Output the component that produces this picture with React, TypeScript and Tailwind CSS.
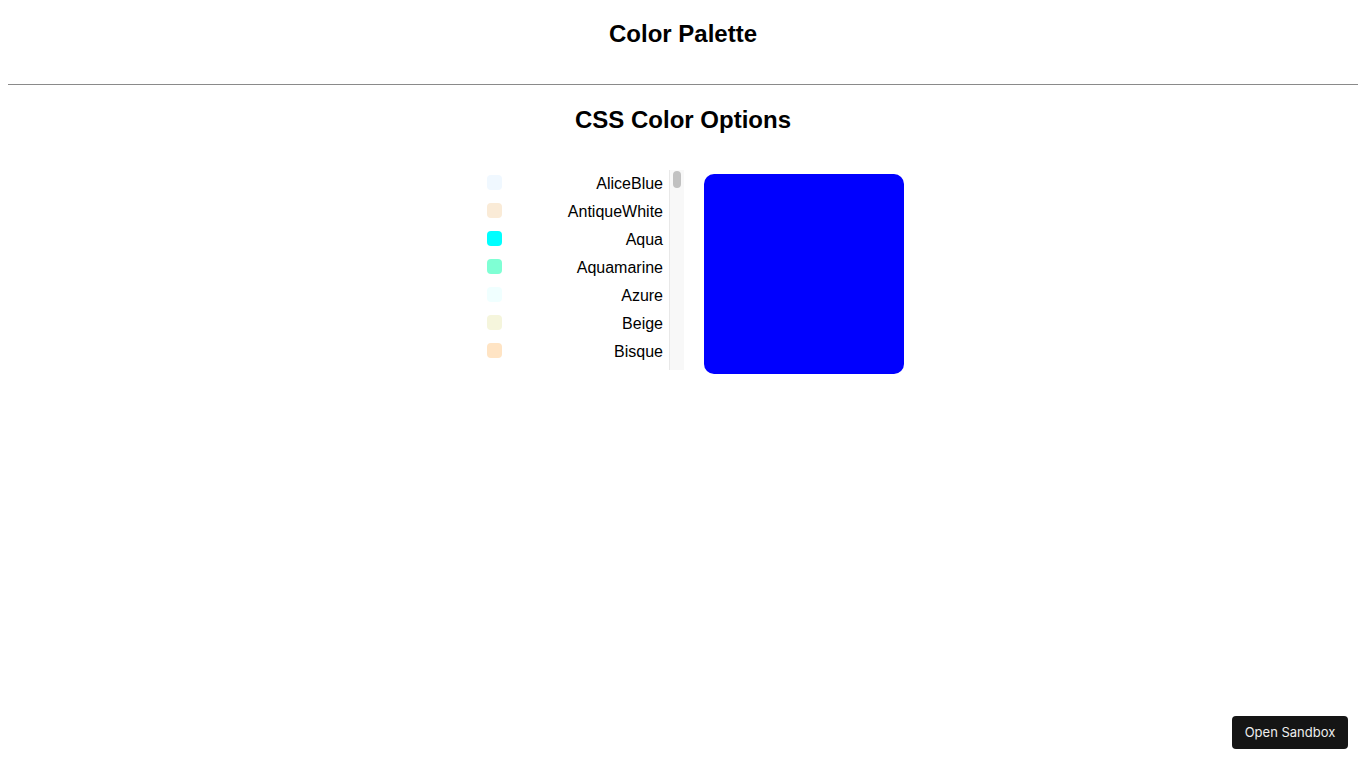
const colors = [
  { name: 'AliceBlue', hex: '#F0F8FF' },
  { name: 'AntiqueWhite', hex: '#FAEBD7' },
  { name: 'Aqua', hex: '#00FFFF' },
  { name: 'Aquamarine', hex: '#7FFFD4' },
  { name: 'Azure', hex: '#F0FFFF' },
  { name: 'Beige', hex: '#F5F5DC' },
  { name: 'Bisque', hex: '#FFE4C4' },
]

export default function App() {
  return (
    <div className="min-h-screen bg-white px-2 font-['Liberation_Sans',Arial,sans-serif] text-black">
      <h1 className="pt-5 text-center text-[24px] font-bold leading-[28px]">
        Color Palette
      </h1>
      <hr className="mt-[36px] border-0 border-t border-[#8a8a8a]" />
      <h2 className="mt-[21px] text-center text-[24px] font-bold leading-[28px]">
        CSS Color Options
      </h2>

      <div className="mt-[36px] flex items-start justify-center gap-5 pl-[2px]">
        <div className="flex h-[200px] w-[220px]">
          {/* visible slice of the scrolling list */}
          <ul className="flex-1 overflow-hidden">
            {colors.map((c) => (
              <li
                key={c.name}
                className="flex h-[28px] items-center justify-between pl-[23px] pr-[6px] text-[16px]"
              >
                <span
                  className="-mt-[3px] h-[15px] w-[15px] rounded-[4px]"
                  style={{ backgroundColor: c.hex }}
                />
                <span>{c.name}</span>
              </li>
            ))}
          </ul>
          <div className="w-[15px] border-l border-[#e8e8e8] bg-[#f8f8f8] pl-[3px] pt-[1px]">
            <div className="h-[17px] w-[8px] rounded-full bg-[#c1c1c1]" />
          </div>
        </div>
        <div className="mt-[4px] h-[200px] w-[200px] rounded-[10px] bg-[#0000FF]" />
      </div>

      <button className="fixed bottom-[19px] right-[18px] h-[33px] w-[116px] rounded-[4px] bg-[#151515] pt-[1px] font-['Inter',sans-serif] text-[13px] text-[#eeeeee]">
        Open Sandbox
      </button>
    </div>
  )
}
